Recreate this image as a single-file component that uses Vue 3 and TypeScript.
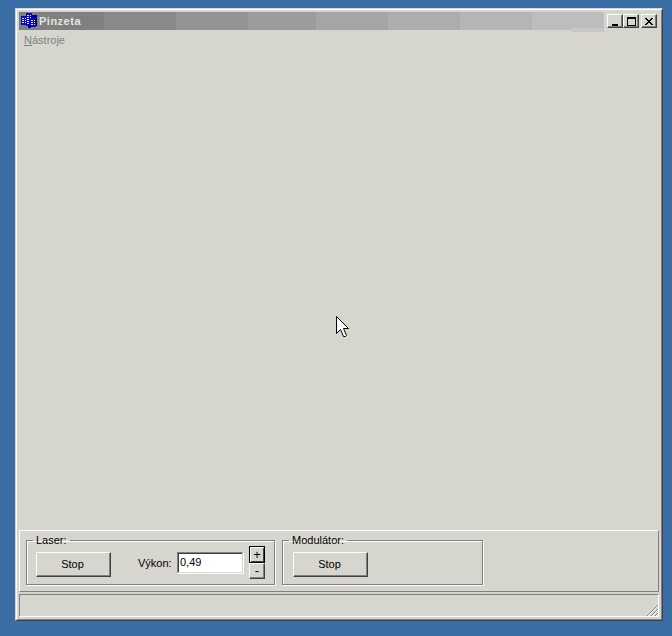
<script setup lang="ts">
const titleSteps = [
  { width: 85, color: '#808080' },
  { width: 72, color: '#8a8a8a' },
  { width: 72, color: '#939393' },
  { width: 68, color: '#9c9c9c' },
  { width: 72, color: '#a5a5a5' },
  { width: 72, color: '#adadad' },
  { width: 72, color: '#b5b5b5' },
  { width: 72, color: '#bdbdbd' },
]
</script>

<template>
  <div class="window">
    <div class="titlebar">
      <div class="title-bg">
        <div
          v-for="step in titleSteps"
          :key="step.color"
          :style="{ width: step.width + 'px', background: step.color }"
        ></div>
      </div>
      <div class="ghost"></div>
      <svg class="app-icon" width="17" height="16" viewBox="0 0 17 16" shape-rendering="crispEdges">
        <rect x="0" y="3" width="6" height="9" fill="#0000ff" />
        <rect x="5" y="0" width="6" height="13" fill="#0000ff" />
        <rect x="10" y="2" width="6" height="11" fill="#000080" />
        <rect x="9" y="5" width="6" height="9" fill="#0000ff" />
        <rect x="7" y="13" width="3" height="2" fill="#000080" />
        <path d="M1 5h2v1H1zM4 5h1v1H4zM1 7h2v1H1zM4 7h1v1H4zM1 9h2v1H1zM4 9h1v1H4zM6 2h2v1H6zM9 2h1v1H9zM6 4h2v1H6zM9 4h1v1H9zM6 6h2v1H6zM6 8h2v1H6zM6 10h2v1H6zM10 7h2v1h-2zM13 7h1v1h-1zM10 9h2v1h-2zM13 9h1v1h-1zM10 11h2v1h-2zM13 11h1v1h-1z" fill="#ffff00" />
      </svg>
      <span class="title">Pinzeta</span>
      <div class="caption-buttons">
        <button class="caption-btn">
          <svg width="9" height="9" viewBox="0 0 9 9" shape-rendering="crispEdges"><rect x="1" y="7" width="6" height="2" fill="#000" /></svg>
        </button>
        <button class="caption-btn">
          <svg width="9" height="9" viewBox="0 0 9 9" shape-rendering="crispEdges"><path d="M0 0h9v2H0zM0 2h1v7H0zM8 2h1v7H8zM0 8h9v1H0z" fill="#000" /></svg>
        </button>
        <button class="caption-btn close">
          <svg width="8" height="7" viewBox="0 0 8 7" shape-rendering="crispEdges"><path d="M0 0h2v1H0zM6 0h2v1H6zM1 1h2v1H1zM5 1h2v1H5zM2 2h4v1H2zM3 3h2v1H3zM2 4h4v1H2zM1 5h2v1H1zM5 5h2v1H5zM0 6h2v1H0zM6 6h2v1H6z" fill="#000" /></svg>
        </button>
      </div>
    </div>

    <div class="menubar">
      <span class="menu-item"><u>N</u>ástroje</span>
    </div>

    <div class="client"></div>

    <div class="controls">
      <fieldset class="group laser">
        <legend>Laser:</legend>
        <button class="btn stop">Stop</button>
        <label class="power-label">Výkon:</label>
        <input class="power-input" type="text" value="0,49" />
        <div class="steppers">
          <button class="btn step default">+</button>
          <button class="btn step">-</button>
        </div>
      </fieldset>
      <fieldset class="group modulator">
        <legend>Modulátor:</legend>
        <button class="btn stop">Stop</button>
      </fieldset>
    </div>

    <div class="statusbar">
      <svg class="grip" width="12" height="12" viewBox="0 0 12 12" shape-rendering="crispEdges">
        <path d="M11 1h1v1h-1zM10 2h1v1h-1zM9 3h1v1H9zM8 4h1v1H8zM7 5h1v1H7zM6 6h1v1H6zM5 7h1v1H5zM4 8h1v1H4zM3 9h1v1H3zM2 10h1v1H2zM1 11h1v1H1zM11 5h1v1h-1zM10 6h1v1h-1zM9 7h1v1H9zM8 8h1v1H8zM7 9h1v1H7zM6 10h1v1H6zM5 11h1v1H5zM11 9h1v1h-1zM10 10h1v1h-1zM9 11h1v1H9z" fill="#808080" />
        <path d="M11 2h1v1h-1zM10 3h1v1h-1zM9 4h1v1H9zM8 5h1v1H8zM7 6h1v1H7zM6 7h1v1H6zM5 8h1v1H5zM4 9h1v1H4zM3 10h1v1H3zM2 11h1v1H2zM11 6h1v1h-1zM10 7h1v1h-1zM9 8h1v1H9zM8 9h1v1H8zM7 10h1v1H7zM6 11h1v1H6zM11 10h1v1h-1zM10 11h1v1h-1z" fill="#ffffff" />
      </svg>
    </div>

    <svg class="cursor" width="13" height="21" viewBox="0 0 13 21">
      <path d="M0.5 0.5V17.5L4.5 13.5L7.5 20.5H9.5L10.5 19.5L7.5 12.5H12.5Z" fill="#fff" stroke="#000" stroke-width="1" />
    </svg>
  </div>
</template>

<style>
html,
body {
  margin: 0;
  background: #3a6ea5;
}
</style>

<style scoped>
.window {
  position: relative;
  box-sizing: border-box;
  width: 648px;
  height: 613px;
  margin: 8px 0 0 15px;
  padding: 3px;
  display: flex;
  flex-direction: column;
  background: #d6d6ce;
  border-style: solid;
  border-width: 1px;
  border-color: #d6d6ce #404040 #404040 #d6d6ce;
  box-shadow: inset 1px 1px 0 #fff, inset -1px -1px 0 #808080;
  font-family: "Liberation Sans", Arial, sans-serif;
  font-size: 11px;
  color: #000;
}

.titlebar {
  position: relative;
  flex: none;
  height: 18px;
  display: flex;
  align-items: center;
  background: #d6d6ce;
}

.title-bg {
  position: absolute;
  inset: 0 auto 0 0;
  display: flex;
}

.ghost {
  position: absolute;
  left: 553px;
  top: 16px;
  width: 32px;
  height: 4px;
  background: #cbc5c5;
}

.app-icon {
  position: relative;
  margin-left: 2px;
}

.title {
  position: relative;
  margin-left: 1px;
  font-size: 11px;
  font-weight: 700;
  letter-spacing: 0.5px;
  color: #e4e4e0;
}

.caption-buttons {
  position: relative;
  margin-left: auto;
  margin-right: 2px;
  display: flex;
}

.caption-btn {
  box-sizing: border-box;
  width: 16px;
  height: 14px;
  padding: 0;
  display: flex;
  align-items: center;
  justify-content: center;
  background: #d6d6ce;
  border: 1px solid;
  border-color: #fff #404040 #404040 #fff;
  box-shadow: inset -1px -1px 0 #808080;
}

.caption-btn.close {
  margin-left: 2px;
}

.menubar {
  flex: none;
  height: 19px;
  padding-left: 5px;
  display: flex;
  align-items: center;
}

.menu-item {
  color: #808080;
}

.client {
  flex: 1;
}

.controls {
  flex: none;
  box-sizing: border-box;
  height: 62px;
  padding: 3px 0 0 6px;
  display: flex;
  gap: 7px;
  border-top: 1px solid #fff;
  border-left: 1px solid #fff;
  border-right: 1px solid #808080;
  border-bottom: 1px solid #808080;
}

.group {
  position: relative;
  box-sizing: border-box;
  margin: 0;
  height: 51px;
  padding: 0 0 0 9px;
  display: flex;
  align-items: flex-start;
  border: 1px solid #808080;
  box-shadow: 1px 1px 0 #fff, inset 1px 1px 0 #fff;
}

.group legend {
  padding: 0 3px;
  margin-left: -3px;
  line-height: 12px;
}

.laser {
  width: 249px;
}

.modulator {
  width: 201px;
}

.modulator .stop {
  margin-left: 1px;
}

.btn {
  box-sizing: border-box;
  padding: 0;
  font: inherit;
  color: #000;
  background: #d6d6ce;
  border: 1px solid;
  border-color: #fff #404040 #404040 #fff;
  box-shadow: inset -1px -1px 0 #808080;
}

.stop {
  width: 75px;
  height: 25px;
  margin-top: 6px;
  padding: 0 2px 2px 0;
}

.power-label {
  margin: 11px 0 0 27px;
  width: 39px;
}

.power-input {
  box-sizing: border-box;
  width: 66px;
  height: 21px;
  margin-top: 6px;
  padding: 0 0 2px 2px;
  font: inherit;
  background: #fff;
  border: 1px solid;
  border-color: #808080 #d6d6ce #d6d6ce #808080;
  box-shadow: inset 1px 1px 0 #404040, 1px 1px 0 #fff;
  outline: none;
}

.steppers {
  margin: 0 0 0 6px;
  display: flex;
  flex-direction: column;
}

.step {
  width: 16px;
  height: 16px;
  line-height: 12px;
  font-size: 13px;
}

.step.default {
  height: 17px;
  border-color: #000;
  box-shadow: inset 1px 1px 0 #fff, inset -1px -1px 0 #404040;
}

.statusbar {
  position: relative;
  flex: none;
  box-sizing: border-box;
  height: 23px;
  margin-top: 2px;
  border-top: 1px solid #808080;
  border-left: 1px solid #808080;
  border-right: 1px solid #fff;
  border-bottom: 1px solid #fff;
}

.grip {
  position: absolute;
  right: 0;
  bottom: 0;
}

.cursor {
  position: absolute;
  left: 320px;
  top: 307px;
}
</style>
